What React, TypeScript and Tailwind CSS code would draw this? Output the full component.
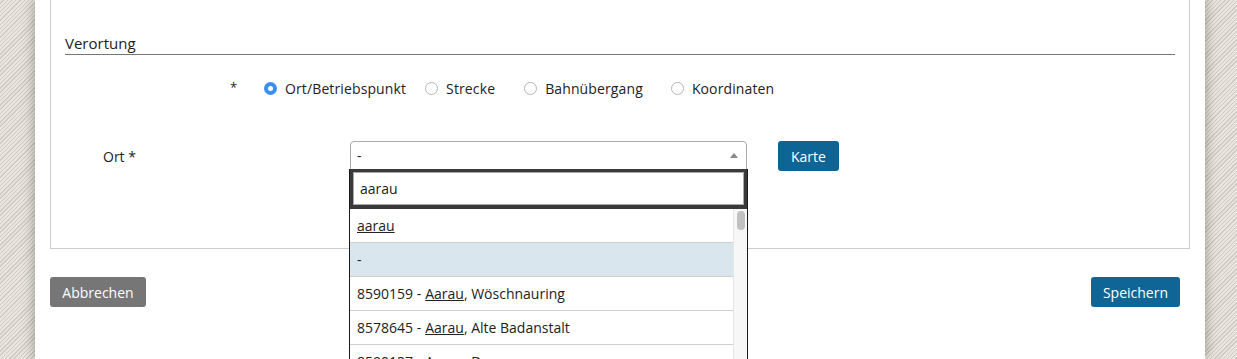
import React from "react";

const font = { fontFamily: '"Open Sans", "Noto Sans", sans-serif' };

function Radio({ checked, label }: { checked?: boolean; label: string }) {
  return (
    <label className="flex items-center gap-[8px]">
      {checked ? (
        <span className="w-[13px] h-[13px] rounded-full bg-[#3b8ff0] flex items-center justify-center">
          <span className="w-[5px] h-[5px] rounded-full bg-white" />
        </span>
      ) : (
        <span className="w-[13px] h-[13px] rounded-full border border-[#b5b5b5] bg-white" />
      )}
      <span className="tracking-[0.12px]">{label}</span>
    </label>
  );
}

function Row({ children, active }: { children: React.ReactNode; active?: boolean }) {
  return (
    <div
      className={
        "h-[34px] flex items-center pl-[7px] border-b border-[#cfcfcf] " +
        (active ? "bg-[#d9e6ee]" : "bg-white")
      }
    >
      {children}
    </div>
  );
}

export default function App() {
  const stripes = {
    backgroundColor: "#e6e3dc",
    backgroundImage:
      "repeating-linear-gradient(135deg, #e8e5de 0px, #e8e5de 2px, #cfcbc2 2px, #cfcbc2 3px)",
  };
  return (
    <div className="h-[359px] w-[1237px] overflow-hidden flex text-[14px] text-[#222]" style={{ ...font, ...stripes }}>
      <div className="w-[35px] shrink-0" />
      <div className="w-[1170px] shrink-0 bg-white px-[15px] shadow-[0_0_12px_rgba(0,0,0,0.35)]">
        <div className="border-x border-b border-[#cccccc] h-[249px] px-[14px] pt-[32px]">
          <div className="text-[15px] leading-[22px] border-b border-[#777]">Verortung</div>
          <div className="flex items-center mt-[21px] h-[24px]">
            <span className="ml-[165px] w-[34px] text-[13px]">*</span>
            <div className="flex items-center">
              <Radio checked label="Ort/Betriebspunkt" />
              <div className="ml-[19px]"><Radio label="Strecke" /></div>
              <div className="ml-[29px]"><Radio label="Bahnübergang" /></div>
              <div className="ml-[28px]"><Radio label="Koordinaten" /></div>
            </div>
          </div>
          <div className="flex items-start mt-[41px]">
            <div className="w-[285px] pl-[38px] pt-[5px]">Ort *</div>
            <div className="relative w-[397px]">
              <div className="h-[29px] border border-[#aaa] rounded-t-[4px] flex items-center pl-[6px] pr-[8px] justify-between">
                <span>-</span>
                <span className="w-0 h-0 border-x-[4px] border-x-transparent border-b-[5px] border-b-[#888]" />
              </div>
              <div className="absolute left-[-1px] top-[28px] w-[399px] border-x border-[#1a1a1a] bg-white z-10">
                <div className="bg-[#3a3a3a] px-[3px] pt-[3px] pb-[4px]">
                  <div className="h-[33px] bg-white border border-[#a9a9a9] flex items-center pl-[6px]">aarau</div>
                </div>
                <div className="flex">
                  <div className="flex-1">
                    <Row><span className="underline">aarau</span></Row>
                    <Row active>-</Row>
                    <Row>8590159 - <span className="underline ml-[4px]">Aarau</span>, Wöschnauring</Row>
                    <Row>8578645 - <span className="underline ml-[4px]">Aarau</span>, Alte Badanstalt</Row>
                    <Row>8590137 - <span className="underline ml-[4px]">Aarau</span>, Dammweg</Row>
                  </div>
                  <div className="w-[14px] bg-[#f7f7f7] border-l border-[#e6e6e6] pt-[2px] flex justify-center">
                    <div className="w-[8px] h-[19px] rounded-full bg-[#c1c1c1]" />
                  </div>
                </div>
              </div>
            </div>
            <button className="ml-[31px] h-[30px] px-[13px] rounded-[3px] bg-[#0f6496] text-white">Karte</button>
          </div>
        </div>
        <div className="flex justify-between mt-[28px] pr-[10px]">
          <button className="h-[30px] w-[96px] rounded-[3px] bg-[#767676] text-white">Abbrechen</button>
          <button className="h-[30px] w-[89px] rounded-[3px] bg-[#106597] text-white">Speichern</button>
        </div>
      </div>
    </div>
  );
}
